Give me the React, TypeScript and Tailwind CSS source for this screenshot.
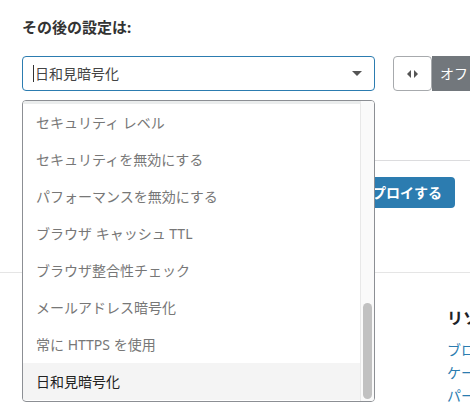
const options = [
  "セキュリティ レベル",
  "セキュリティを無効にする",
  "パフォーマンスを無効にする",
  "ブラウザ キャッシュ TTL",
  "ブラウザ整合性チェック",
  "メールアドレス暗号化",
  "常に HTTPS を使用",
  "日和見暗号化",
];

export default function App() {
  const selected = "日和見暗号化";

  return (
    <div className="relative h-[402px] w-[470px] overflow-hidden bg-white font-['Noto_Sans','Noto_Sans_CJK_JP',sans-serif] text-[#1d2327]">
      {/* page content under the open dropdown */}
      <div className="pl-[22px] pt-[16px]">
        <h2 className="text-[15px] font-bold leading-[22px] text-[#333]">その後の設定は:</h2>

        <div className="mt-[18px] flex items-center gap-[18px]">
          <div className="flex h-[35px] w-[353px] shrink-0 items-center justify-between rounded-[4px] border border-[#2c7cb0] pl-[10px] pr-[12px]">
            <div className="flex items-center">
              <span className="mr-[1px] h-[17px] w-px bg-[#333]" />
              <span className="text-[14px] text-[#444]">{selected}</span>
            </div>
            <span className="h-0 w-0 border-x-[5px] border-t-[5px] border-x-transparent border-t-[#555]" />
          </div>

          <div className="flex h-[35px] shrink-0">
            <div className="flex w-[39px] items-center justify-center rounded-[4px] border border-[#a7aaad] bg-white">
              <svg width="11" height="8" viewBox="0 0 11 8">
                <path d="M0 4 L4 0 L4 8 Z" fill="#555" />
                <path d="M11 4 L7 0 L7 8 Z" fill="#555" />
              </svg>
            </div>
            <div className="flex w-[60px] items-center bg-[#72777c] pl-[8px] text-[14px] text-white">オフ</div>
          </div>
        </div>
      </div>

      <div className="ml-[22px] mt-[69px] border-t border-[#dcdcde]" />

      <div className="flex justify-end pr-[15px] pt-[16px]">
        <button className="h-[31px] rounded-[4px] bg-[#2c7cb0] px-[13px] text-[14px] font-bold text-white">
          デプロイする
        </button>
      </div>

      <div className="mt-[64px] border-t border-[#e5e5e5]" />

      <div className="pl-[447px] pt-[33px]">
        <h3 className="whitespace-nowrap text-[16px] font-bold leading-[24px] text-[#1d2327]">リソース</h3>
        <ul className="mt-[10px] space-y-[3px] whitespace-nowrap text-[14px] leading-[20px] text-[#2c7cb0]">
          <li>ブログ</li>
          <li>ケーススタディ</li>
          <li>パートナー</li>
        </ul>
      </div>

      {/* open dropdown list */}
      <div className="absolute left-[22px] top-[100px] flex h-[302px] w-[353px] overflow-hidden rounded-[4px] border border-[#8c8f94] bg-white">
        <div className="flex-1">
          <div className="h-[3px] bg-[#ebeded]" />
          {options.map((option) => (
            <div
              key={option}
              className={
                option === selected
                  ? "flex h-[37px] items-center bg-[#f4f4f4] pl-[13px] text-[14px] text-[#222]"
                  : "flex h-[37px] items-center pl-[13px] text-[14px] text-[#777]"
              }
            >
              {option}
            </div>
          ))}
        </div>
        <div className="flex w-[14px] flex-col justify-end border-l border-[#e8e8e8] bg-[#fafafa] px-[2px] pb-[2px]">
          <div className="h-[96px] rounded-full bg-[#c1c1c1]" />
        </div>
      </div>
    </div>
  );
}
